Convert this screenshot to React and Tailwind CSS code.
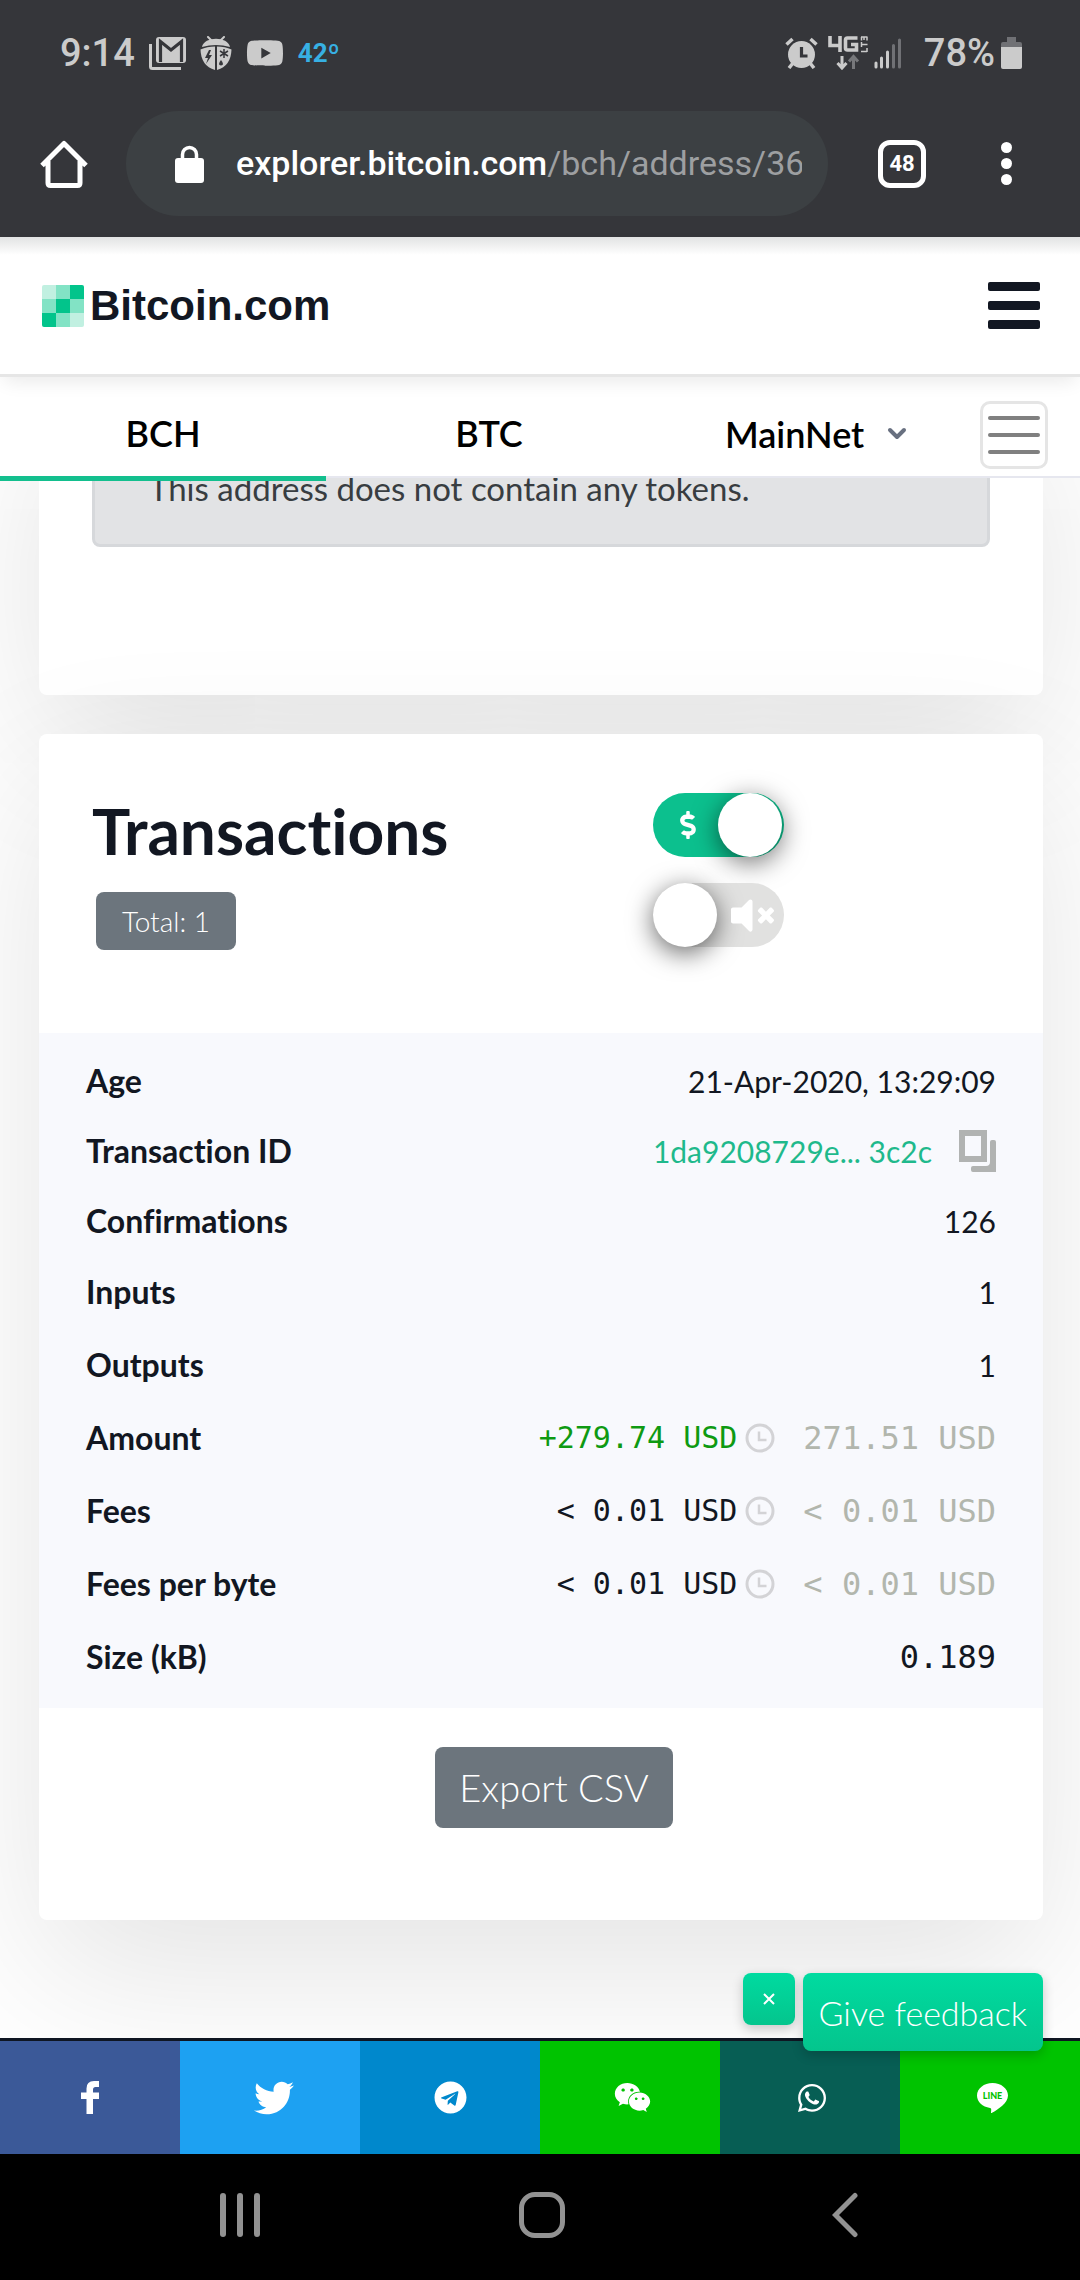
import React from 'react';
import { FaTwitter, FaTelegram, FaWeixin, FaWhatsapp, FaVolumeMute, FaDollarSign, FaYoutube } from 'react-icons/fa';

function GmailIcon() {
  return (
    <svg viewBox="0 0 37 33" className="h-[33px] w-[37px]" fill="none">
      <path d="M1.5 7v22.500q0 2 2 2H32" stroke="#cbcbcb" strokeWidth="3" />
      <rect x="7" y="0" width="30" height="26" rx="3" fill="#cbcbcb" />
      <path d="M11.500 25V4.500L22 13l10.500-8.500V25" stroke="#35363a" strokeWidth="3.200" />
    </svg>
  );
}

function BugIcon() {
  return (
    <svg viewBox="0 0 32 34" className="h-[34px] w-[32px]" fill="none">
      <path d="M8 1l4 4M24 1l-4 4" stroke="#cbcbcb" strokeWidth="2" strokeLinecap="round" />
      <path d="M2 11C4 0 28 0 30 11Q16 7 2 11Z" fill="#cbcbcb" />
      <path d="M.5 13.500Q7 10.500 15 10.500V34Q1 30 .5 13.500Z" fill="#cbcbcb" />
      <path d="M31.500 13.500Q25 10.500 17 10.500V34Q31 30 31.500 13.500Z" fill="#cbcbcb" />
      <path d="M9 14l-4 8h3l-2 6 6-9H9l2-5z" fill="#35363a" />
      <path d="M24 13v9M20 15l8 5M28 15l-8 5" stroke="#35363a" strokeWidth="1.500" />
      <path d="M21 24q-4 5 0 5.500q4-.5 0-5.500z" fill="#35363a" />
    </svg>
  );
}

function AlarmIcon() {
  return (
    <svg viewBox="0 0 33 32" className="h-[32px] w-[33px]" fill="none">
      <path d="M1.500 7.500l6-5.500M31.500 7.500l-6-5.500M8 26l-4 5M25 26l4 5" stroke="#cbcbcb" strokeWidth="3.500" />
      <circle cx="16.500" cy="17.500" r="13.500" fill="#cbcbcb" />
      <path d="M16.500 10v9h6" stroke="#35363a" strokeWidth="3.200" />
    </svg>
  );
}

function NetworkIcon() {
  return (
    <svg viewBox="0 0 40 34" className="h-[34px] w-[40px]" fill="none" aria-label="4G LTE">
      <path d="M2 0v9.500h11M12 0v16M29.500 2H19.500q-2 0-2 2v8q0 2 2 2h9V8.500H23" stroke="#cbcbcb" strokeWidth="3.600" />
      <path d="M33 15.500h6M39 12v4M33 8.500h6.500M33.500 6v5M33.500 1v3.500M36 1v3M39 1v3.500M33 1h6.500" stroke="#cbcbcb" strokeWidth="1.500" />
      <path d="M14 20v12M9.500 27l4.500 5 4.500-5" stroke="#cbcbcb" strokeWidth="3" />
      <path d="M25.500 33V21M21 25.500l4.500-5 4.500 5" stroke="#77787b" strokeWidth="3" />
    </svg>
  );
}

function SignalIcon() {
  return (
    <svg viewBox="0 0 28 32" className="h-[32px] w-[28px]" strokeWidth="3" strokeLinecap="round">
      <path d="M2 26v4M7.500 21v9M13.500 15v15" stroke="#cbcbcb" />
      <path d="M19.500 8.500V30M25.500 3v27" stroke="#707175" />
    </svg>
  );
}

function BatteryIcon() {
  return (
    <svg viewBox="0 0 21 34" className="h-[34px] w-[21px]">
      <path d="M6 1h9v5h4q2 0 2 2v4H0V8q0-2 2-2h4z" fill="#707175" />
      <path d="M0 11h21v20q0 2-2 2H2q-2 0-2-2z" fill="#cbcbcb" />
    </svg>
  );
}

function StatusBar() {
  return (
    <div className="flex h-[106px] items-center justify-between pl-[60px] pr-[58px] text-[#cbcbcb]">
      <div className="flex items-center gap-3.5">
        <span className="text-[38px] font-medium leading-none">9:14</span>
        <GmailIcon />
        <BugIcon />
        <FaYoutube className="h-[38px] w-[38px]" />
        <span className="text-[26px] font-bold leading-none text-[#37b0e3]">42º</span>
      </div>
      <div className="flex items-center">
        <AlarmIcon />
        <span className="ml-2.5"><NetworkIcon /></span>
        <span className="ml-1.5"><SignalIcon /></span>
        <span className="ml-[22px] text-[38px] font-medium leading-none">78%</span>
        <span className="ml-1.5"><BatteryIcon /></span>
      </div>
    </div>
  );
}

function BrowserBar() {
  return (
    <div className="flex h-[131px] items-center pb-[21px] pl-10 pr-[68px] pt-[5px]">
      <button aria-label="Home">
        <svg viewBox="0 0 48 48" className="size-12" fill="none" stroke="#fff" strokeWidth="5" strokeLinejoin="round">
          <path d="M2 25.500L24 3.500L46 25.500M8 21v22q0 2.500 2.500 2.500h27q2.500 0 2.500-2.500V21" />
        </svg>
      </button>
      <button className="ml-[38px] flex h-[105px] min-w-0 flex-1 items-center rounded-full bg-[#3c4043] pl-[49px] pr-[26px]">
        <svg viewBox="0 0 29 38" className="h-[38px] w-[29px] shrink-0">
          <path d="M7.500 15V9.500a7 7 0 0 1 14 0V15" fill="none" stroke="#fff" strokeWidth="3.500" />
          <rect y="13" width="29" height="25" rx="3" fill="#fff" />
        </svg>
        <span className="ml-8 overflow-hidden whitespace-nowrap text-left text-[34px] text-[#9d9fa1]">
          <span className="font-medium text-white">explorer.bitcoin.com</span>/bch/address/36
        </span>
      </button>
      <button className="ml-[50px] flex size-12 items-center justify-center rounded-xl border-[5px] border-white text-[22px] font-bold leading-none text-white">
        48
      </button>
      <button aria-label="More" className="ml-[75px] flex flex-col gap-[5px]">
        <span className="size-[11px] rounded-full bg-white" />
        <span className="size-[11px] rounded-full bg-white" />
        <span className="size-[11px] rounded-full bg-white" />
      </button>
    </div>
  );
}

function SiteHeader() {
  return (
    <header className="relative z-20 flex h-[140px] items-center justify-between border-b-[3px] border-[#e6e6e6] bg-white bg-linear-to-b from-[#e2e3e3] to-white to-[18px] pl-[42px] pr-10 shadow-[0_8px_18px_-4px_rgba(0,0,0,0.09)]">
      <a href="#" className="flex items-center gap-1.5">
        <span className="grid size-[42px] grid-cols-3 overflow-hidden rounded-xs">
          <span className="bg-[#c1f0e1]" />
          <span className="bg-[#82e3c5]" />
          <span className="bg-[#02c48b]" />
          <span className="bg-[#82e3c5]" />
          <span className="bg-[#02c48b]" />
          <span className="bg-[#82e3c5]" />
          <span className="bg-[#02c48b]" />
          <span className="bg-[#82e3c5]" />
          <span className="bg-[#c1f0e1]" />
        </span>
        <span className="font-['Liberation_Sans',sans-serif] text-[42px] font-bold leading-none text-[#121722]">Bitcoin.com</span>
      </a>
      <button aria-label="Menu" className="flex w-[52px] flex-col gap-2.5">
        <span className="h-[9px] rounded-xs bg-[#121722]" />
        <span className="h-[9px] rounded-xs bg-[#121722]" />
        <span className="h-[9px] rounded-xs bg-[#121722]" />
      </button>
    </header>
  );
}

function CoinNav() {
  return (
    <nav className="relative z-10 flex h-[101px] items-stretch border-b-2 border-[#e6e7ef] bg-white pr-8 text-4xl font-semibold text-black">
      <a href="#bch" className="relative flex flex-1 items-center justify-center pt-3 after:absolute after:inset-x-0 after:-bottom-[5px] after:h-[5px] after:bg-[#13bf8e]">
        BCH
      </a>
      <a href="#btc" className="flex flex-1 items-center justify-center pt-3">BTC</a>
      <div className="flex w-[328px] items-center pl-[73px] pt-3.5">
        <label className="flex items-center gap-[22px]">
          <select aria-label="Network" className="appearance-none bg-transparent">
            <option>MainNet</option>
          </select>
          <svg viewBox="0 0 20 13" className="h-[13px] w-5" fill="none" stroke="#687080" strokeWidth="4" strokeLinecap="round" strokeLinejoin="round">
            <path d="M3 3l7 7 7-7" />
          </svg>
        </label>
      </div>
      <button aria-label="Toggle navigation" className="mt-6 flex h-[68px] w-[68px] flex-col justify-center gap-[13px] rounded-[10px] border-[3px] border-[#e5e5e5] px-[5px]">
        <span className="h-1 w-full rounded-full bg-[#808080]" />
        <span className="h-1 w-full rounded-full bg-[#808080]" />
        <span className="h-1 w-full rounded-full bg-[#808080]" />
      </button>
    </nav>
  );
}

function Toggles() {
  return (
    <div className="flex flex-col items-start gap-[26px]">
      <label className="flex h-16 w-[131px] items-center rounded-full bg-[#0cc08e] pr-0.5">
        <input type="checkbox" role="switch" defaultChecked aria-label="Show fiat values" className="sr-only" />
        <span className="flex flex-1 justify-center pl-1 text-white"><FaDollarSign className="size-7" /></span>
        <span className="size-16 rounded-full bg-white shadow-[0_6px_26px_rgba(0,0,0,0.55)]" />
      </label>
      <label className="flex h-16 w-[131px] items-center rounded-full bg-[#e1e1e0]">
        <input type="checkbox" role="switch" aria-label="Sound" className="sr-only" />
        <span className="size-16 rounded-full bg-white shadow-[0_6px_26px_rgba(0,0,0,0.6)]" />
        <span className="flex flex-1 justify-center pl-1 text-white"><FaVolumeMute className="size-[43px]" /></span>
      </label>
    </div>
  );
}

function ClockIcon() {
  return (
    <svg viewBox="0 0 30 30" className="size-[30px] shrink-0" fill="none" stroke="#d3d3d6">
      <circle cx="15" cy="15" r="13" strokeWidth="3" />
      <path d="M14 8.500v8.500h7.500" strokeWidth="2.500" />
    </svg>
  );
}

function CopyIcon() {
  return (
    <svg viewBox="0 0 37 42" className="h-[42px] w-[37px]" fill="none">
      <rect x="3" y="3" width="22" height="26" stroke="#b1b3b2" strokeWidth="6" />
      <path d="M31 12q0-2 2-2h2q2 0 2 2v30H14q-2 0-2-2v-2q0-2 2-2h13q4 0 4-4z" fill="#b1b3b2" />
    </svg>
  );
}

function Money({ now, then, positive }) {
  return (
    <span className="flex items-center justify-end whitespace-pre font-['DejaVu_Sans_Mono',monospace]">
      <span className={positive ? 'text-[30px] text-[#0e9a12]' : 'text-[30px]'}>{now}</span>
      <span className="ml-2"><ClockIcon /></span>
      <span className="ml-7 text-[32px] text-[#b2b6ad]">{then}</span>
    </span>
  );
}

const rows = [
  ['Age', '21-Apr-2020, 13:29:09', 'h-[70px]'],
  [
    'Transaction ID',
    <span className="flex items-center justify-end gap-[27px]">
      <a href="#tx" className="text-[#1fb98c]">1da9208729e... 3c2c</a>
      <button aria-label="Copy transaction ID"><CopyIcon /></button>
    </span>,
    'h-[70px]',
  ],
  ['Confirmations', '126', 'h-[70px]'],
  ['Inputs', '1', 'h-[72px]'],
  ['Outputs', '1', 'h-[73px]'],
  ['Amount', <Money now="+279.74 USD" then="271.51 USD" positive />, 'h-[73px]'],
  ['Fees', <Money now="< 0.01 USD" then="< 0.01 USD" />, 'h-[73px]'],
  ['Fees per byte', <Money now="< 0.01 USD" then="< 0.01 USD" />, 'h-[73px]'],
  ['Size (kB)', <span className="font-['DejaVu_Sans_Mono',monospace] text-[32px]">0.189</span>, 'h-[73px]'],
];

function Transactions() {
  return (
    <section className="mt-[39px] rounded-lg bg-white pb-[92px] pt-[59px] shadow-[0_52px_156px_rgba(0,0,0,0.11)]">
      <div className="grid grid-cols-[5fr_3fr] px-[53px] pb-[83px]">
        <div>
          <h2 className="text-[64px] font-bold leading-[76px]">Transactions</h2>
          <span className="ml-1 mt-[23px] flex h-[58px] w-fit items-center rounded-lg bg-[#6c757d] px-[26px] text-[28px] font-light text-white">
            Total: 1
          </span>
        </div>
        <Toggles />
      </div>
      <div className="bg-[#f8f9fd] px-[47px] pb-[15px] pt-[13px]">
        <table className="w-full">
          <tbody>
            {rows.map(([label, value, height]) => (
              <tr key={label} className={height}>
                <th scope="row" className="p-0 text-left text-[32px] font-bold leading-10">{label}</th>
                <td className="p-0 text-right text-[30px] leading-10">{value}</td>
              </tr>
            ))}
          </tbody>
        </table>
      </div>
      <div className="flex justify-center pl-[26px] pt-[39px]">
        <button className="h-[81px] rounded-lg bg-[#6c757d] px-6 text-[38px] font-light text-white">Export CSV</button>
      </div>
    </section>
  );
}

function Social() {
  return (
    <footer className="relative z-10 border-t-[3px] border-[#0f1622]">
      <div className="absolute -top-[68px] right-[37px] z-10 flex items-start gap-2 text-white">
        <button aria-label="Dismiss feedback" className="flex size-[52px] items-center justify-center rounded-lg bg-linear-to-b from-[#00dba0] to-[#04c58d] shadow-[0_4px_12px_rgba(0,0,0,0.2)]">
          <svg viewBox="0 0 12 12" className="size-3" stroke="#fff" strokeWidth="2">
            <path d="M1 1l10 10M11 1L1 11" />
          </svg>
        </button>
        <button className="h-[78px] rounded-lg bg-linear-to-b from-[#00dba0] to-[#04c58d] px-4 text-[34px] font-light shadow-[0_4px_12px_rgba(0,0,0,0.2)]">
          Give feedback
        </button>
      </div>
      <div className="grid h-[113px] grid-cols-6 text-white">
        <a href="#facebook" aria-label="Facebook" className="flex items-center justify-center bg-[#3b5998]">
          <svg viewBox="0 0 18 33" className="h-[33px] w-[18px]" fill="currentColor">
            <path d="M18 0v6h-3.500Q12 6 12 8.500V11.500h6V18h-6v15H5.500V18H0v-6.500h5.500V7.500Q5.500 0 13 0z" />
          </svg>
        </a>
        <a href="#twitter" aria-label="Twitter" className="flex items-center justify-center bg-[#1da1f2] pl-2"><FaTwitter className="size-10" /></a>
        <a href="#telegram" aria-label="Telegram" className="flex items-center justify-center bg-[#0088cc]"><FaTelegram className="size-[33px]" /></a>
        <a href="#wechat" aria-label="WeChat" className="flex items-center justify-center bg-[#00c300] pl-1"><FaWeixin className="size-[37px]" /></a>
        <a href="#whatsapp" aria-label="WhatsApp" className="flex items-center justify-center bg-[#075e54] pl-1"><FaWhatsapp className="size-8" /></a>
        <a href="#line" aria-label="LINE" className="flex items-center justify-center bg-[#00c300] pl-1">
          <svg viewBox="0 0 31 30" className="h-[30px] w-[31px]">
            <path d="M15.500 0C7 0 0 5.500 0 12.500c0 6.300 5.500 11.500 13 12.400 1.500.3 1.300 1.500 1 4.600-.1.500.3.700 1 .300C21 26.500 31 20 31 12.500 31 5.500 24 0 15.500 0z" fill="#fff" />
            <text x="15.500" y="16" textAnchor="middle" className="fill-[#00c300] font-['Lato',sans-serif] text-[9px] font-black">LINE</text>
          </svg>
        </a>
      </div>
    </footer>
  );
}

function SystemNav() {
  return (
    <div className="flex h-[126px] items-center justify-between bg-black pb-1 pl-[220px] pr-[222px]">
      <button aria-label="Recents" className="flex gap-[11px]">
        <span className="h-11 w-1.5 rounded-full bg-[#929292]" />
        <span className="h-11 w-1.5 rounded-full bg-[#929292]" />
        <span className="h-11 w-1.5 rounded-full bg-[#929292]" />
      </button>
      <button aria-label="Home screen" className="mr-2 size-[46px] rounded-2xl border-[5px] border-[#929292]" />
      <button aria-label="Back">
        <svg viewBox="0 0 26 46" className="h-[46px] w-[26px]" fill="none" stroke="#929292" strokeWidth="5" strokeLinecap="round">
          <path d="M23 3.500L3.500 23L23 42.500" />
        </svg>
      </button>
    </div>
  );
}

export default function App() {
  return (
    <div className="flex min-h-screen flex-col bg-white font-['Lato',sans-serif] text-[#121722] [font-variant-ligatures:no-common-ligatures]">
      <div className="bg-[#35363a] font-['Roboto',sans-serif]">
        <StatusBar />
        <BrowserBar />
      </div>
      <SiteHeader />
      <CoinNav />
      <main className="flex-1 overflow-hidden pb-[118px] pl-[39px] pr-[37px]">
        <section className="-mt-[102px] rounded-lg bg-white px-[53px] pb-[148px] pt-[53px] shadow-[0_52px_156px_rgba(0,0,0,0.11)]">
          <p className="rounded-lg border-[3px] border-[#d6d8db] bg-[#e2e3e5] px-[54px] py-9 text-[33px] leading-10 text-[#383d41]">
            This address does not contain any tokens.
          </p>
        </section>
        <Transactions />
      </main>
      <Social />
      <SystemNav />
    </div>
  );
}
